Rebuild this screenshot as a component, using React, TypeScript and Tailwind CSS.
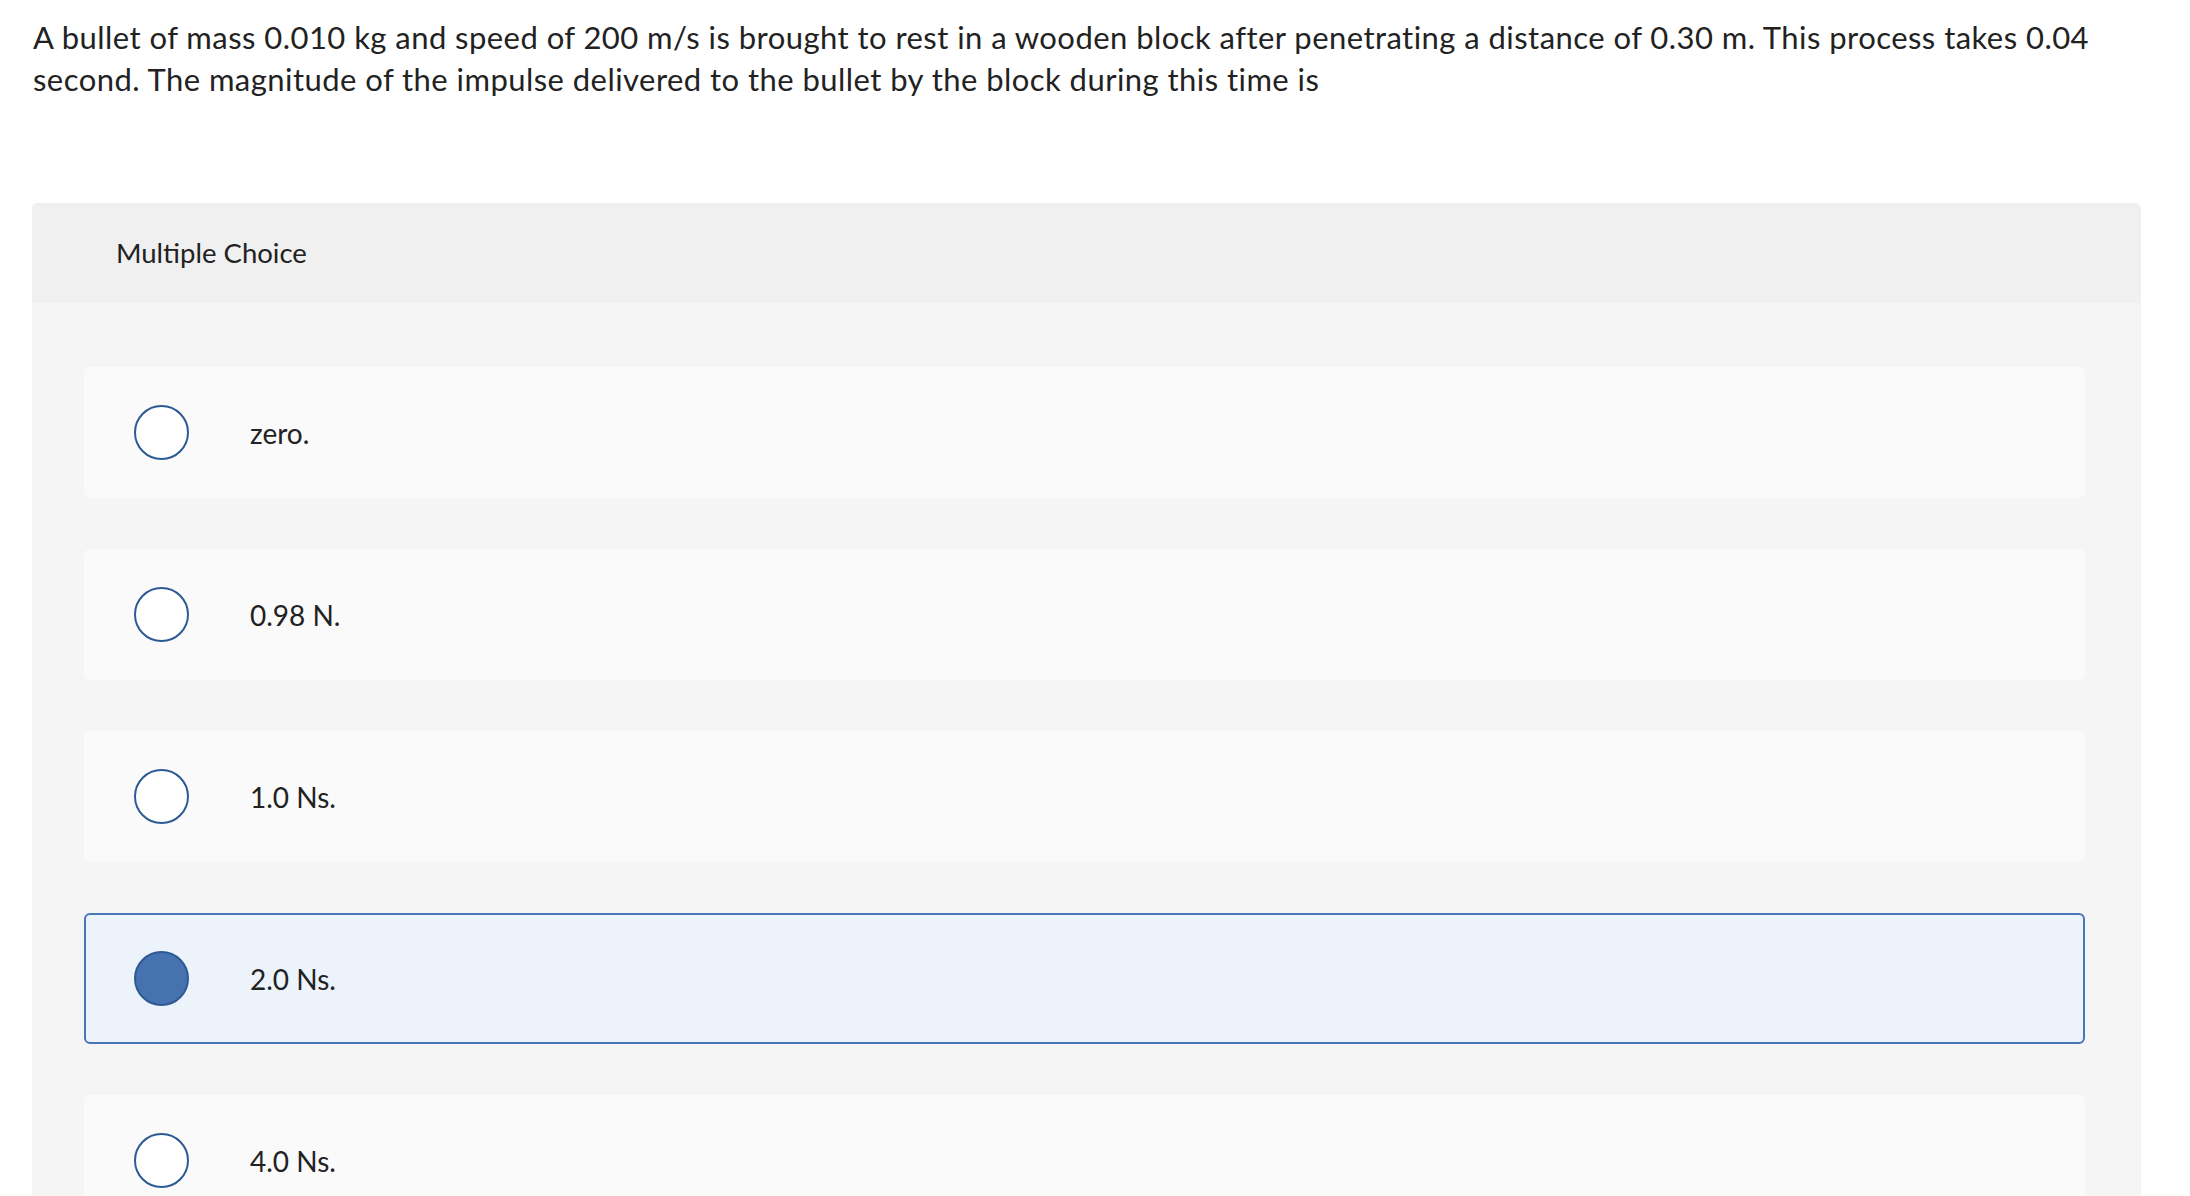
const question =
  "A bullet of mass 0.010 kg and speed of 200 m/s is brought to rest in a wooden block after penetrating a distance of 0.30 m. This process takes 0.04 second. The magnitude of the impulse delivered to the bullet by the block during this time is"

const choices = [
  { label: "zero.", selected: false },
  { label: "0.98 N.", selected: false },
  { label: "1.0 Ns.", selected: false },
  { label: "2.0 Ns.", selected: true },
  { label: "4.0 Ns.", selected: false },
]

function Radio({ checked }: { checked: boolean }) {
  return (
    <span
      className={
        checked
          ? "block size-[55px] shrink-0 rounded-full border-2 border-[#2e5a94] bg-[#4672b0]"
          : "block size-[55px] shrink-0 rounded-full border-2 border-[#2d5a94] bg-white"
      }
    />
  )
}

export default function App() {
  return (
    <div className="min-h-screen overflow-hidden bg-white font-['Lato',sans-serif] text-[#222]">
      <p className="pl-[33px] pr-[60px] pt-[16px] text-[31px] leading-[42px] tracking-[0.45px]">{question}</p>

      <section className="mx-[32px] mt-[103px] w-[2109px] overflow-hidden rounded-t-[6px] bg-[#f5f5f5]">
        <header className="flex h-[100px] items-center bg-[#f0f0f0] pl-[84px] text-[27.5px]">
          Multiple Choice
        </header>
        <div className="flex flex-col gap-[51px] pb-[60px] pl-[52px] pr-[56px] pt-[64px]">
          {choices.map((c) => (
            <label
              key={c.label}
              className={
                c.selected
                  ? "flex h-[131px] items-center rounded-[6px] border-2 border-[#4a76b5] bg-[#ecf3fb] pl-[48px]"
                  : "flex h-[131px] items-center rounded-[6px] border-2 border-transparent bg-[#fafafa] pl-[48px]"
              }
            >
              <Radio checked={c.selected} />
              <span className="ml-[61px] text-[28px]">{c.label}</span>
            </label>
          ))}
        </div>
      </section>
    </div>
  )
}
